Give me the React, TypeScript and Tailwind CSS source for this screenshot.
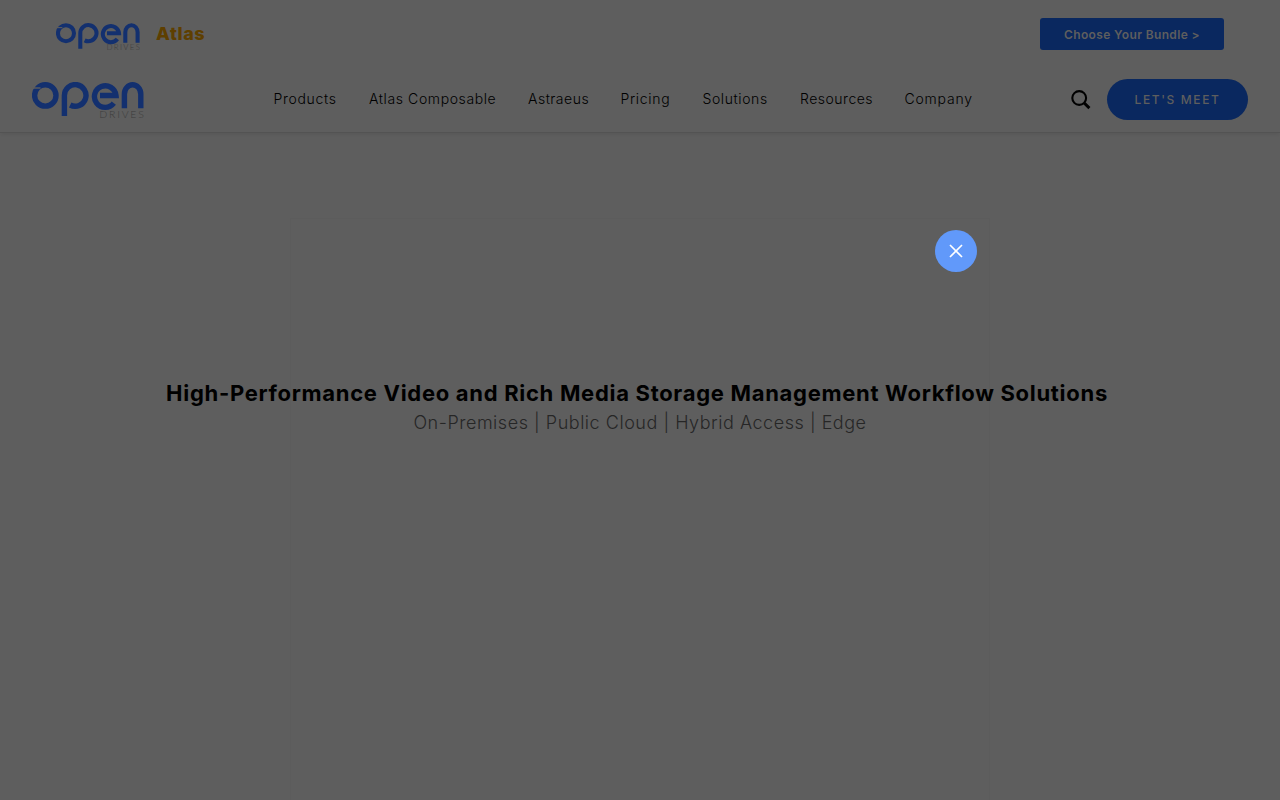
const navItems = [
  { label: "Products", style: "w-[63.5px] tracking-[0.7px]" },
  { label: "Atlas Composable", style: "w-[127px] tracking-[0.6px]" },
  { label: "Astraeus", style: "w-[60.5px] tracking-[0.5px]" },
  { label: "Pricing", style: "w-[50px] tracking-[0.7px]" },
  { label: "Solutions", style: "w-[65.5px] tracking-[0.6px]" },
  { label: "Resources", style: "w-[72.5px] tracking-[0.5px]" },
  { label: "Company", style: "w-[69px] tracking-[0.8px]" },
];

function Logo({ className }: { className: string }) {
  return (
    <svg className={className} viewBox="0 0 112 37" fill="none">
      <g stroke="#13306f" strokeWidth="5.4">
        <circle cx="13.3" cy="13.4" r="10.7" />
        <path d="M32.4 34V13.5A10.8 10.8 0 1 1 38.2 23" />
        <path d="M81.8 21.2A10.8 10.8 0 1 1 84 13.5H68" />
        <path d="M92.4 26.2V12.2A8.2 9.4 0 0 1 108.8 12.2V26.2" />
      </g>
      {/* slit in the "o" */}
      <path d="M0 6H8.5" stroke="#5e5e5e" strokeWidth="1.4" />
      <text x="67.3" y="36.3" fontSize="10.5" textLength="44.5" className="fill-[#3c3c3c] font-['Lato'] font-light">DRIVES</text>
    </svg>
  );
}

export default function App() {
  return (
    <div className="h-screen overflow-hidden bg-[#5e5e5e] font-['Inter',sans-serif]">
      <div className="flex h-[68px] items-center justify-between px-14">
        <div className="flex items-center">
          <Logo className="mt-[5px] h-[28px] w-[84px]" />
          <span className="ml-4 text-lg font-extrabold tracking-[0.6px] text-[#5e3f00]">Atlas</span>
        </div>
        <button className="h-8 w-[184px] rounded-[3px] bg-[#0a285f] pt-px text-xs font-semibold tracking-[0.36px] whitespace-nowrap text-[#5e5e5e]">
          Choose Your Bundle &gt;
        </button>
      </div>

      <header className="flex h-[65px] items-center border-b border-[#535353] px-8 pb-0.5 shadow-[0_3px_3px_-1px_rgba(0,0,0,0.06)]">
        <Logo className="mt-0.5 h-[37px] w-28" />
        <nav className="ml-[129.5px] flex gap-8 text-sm font-light text-black">
          {navItems.map((item) => (
            <a key={item.label} className={`whitespace-nowrap ${item.style}`}>{item.label}</a>
          ))}
        </nav>
        <svg className="mt-0.5 ml-auto size-5" viewBox="0 0 20 20" fill="none" stroke="#000">
          <circle cx="8.2" cy="8" r="6.9" strokeWidth="2.1" />
          <path d="m13.2 13 5.2 5.1" strokeWidth="3" />
        </svg>
        <button className="ml-4 h-[41px] w-[141px] rounded-full bg-[#0a285f] pt-0.5 text-xs font-medium tracking-[1.6px] text-[#5e5e5e]">
          LET'S MEET
        </button>
      </header>

      <main className="pt-[246px] text-center">
        <h1 className="-ml-1.5 text-[22px] leading-7 font-bold tracking-[0.7px] whitespace-nowrap text-black">
          High-Performance Video and Rich Media Storage Management Workflow Solutions
        </h1>
        <p className="pt-px text-lg leading-[30px] font-light tracking-[0.53px] text-[#262626]">
          On-Premises | Public Cloud | Hybrid Access | Edge
        </p>
      </main>

      {/* popup frame, fading in */}
      <div className="absolute top-[218px] left-[290px] h-[582px] w-[700px] border border-b-0 border-black/2" />
      <button className="absolute top-[230px] left-[935px] flex size-[42px] items-center justify-center rounded-full bg-[#6199fa]">
        <svg className="size-3.5" viewBox="0 0 14 14" stroke="white" strokeWidth="1.7">
          <path d="m1 1 12 12m0-12-12 12" />
        </svg>
      </button>
    </div>
  );
}
